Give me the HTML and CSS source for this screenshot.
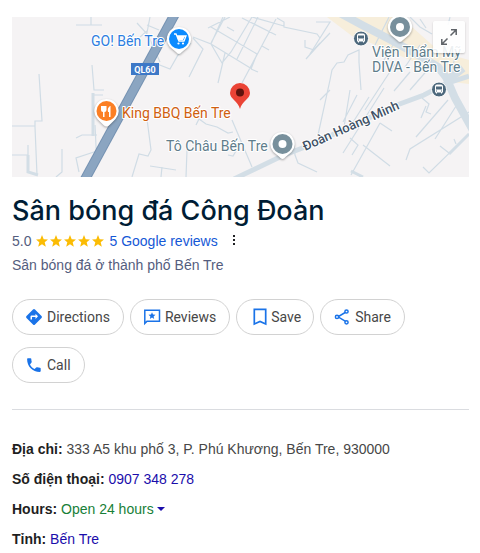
FILE: index.html
```html
<!DOCTYPE html>
<html lang="vi">
<head>
<meta charset="utf-8">
<meta name="viewport" content="width=device-width, initial-scale=1">
<title>Sân bóng đá Công Đoàn</title>
<link rel="stylesheet" href="styles.css">
</head>
<body>
<main class="panel">
  <div class="map">
    <svg class="map-canvas" viewBox="12 17 457 160" preserveAspectRatio="xMidYMid slice" role="img" aria-label="Bản đồ">
      <rect class="land" x="-500" y="17" width="1500" height="160"/>
      <path class="zone" d="M327 17H396L412 27 440 52 469 60V84L452 82 430 68 405 58 376 45 352 36Z"/>
      <g class="lanes">
        <path d="M76 25H102M91 17V25M39 74L42 121H35V127L37 175M12 126H35M92 65L94 90H104M94 95H103M95 125L97 167M76 138L82 135H97M97 151L76 158 79 172M62 149V172L56 177M28 145V171M28 155H12"/>
        <path d="M137 23L148 35 160 62M150 17L146 38M147 25L159 30M140 37L147 31"/>
        <path d="M225 17L211 43M230 17L208 28M252 17L231 52 222 63 211 44 193 37M223 17L211 44M211 27L257 54 251 69M227 27L234 31M242 18L276 35M258 17L237 59M211 44L252 69M225 53L218 83M193 38L203 49 189 77M152 62L170 69 178 55 191 43M276 19L242 83M252 17L284 26M262 46L269 50M251 69L258 72M277 18L284 22V27L317 34 320 38M305 40V47L314 50M306 59L320 43"/>
        <path d="M232 120L252 167M196 125L199 119 206 124 217 127 228 133 233 132M228 155L233 156 236 151M293 139L295 155 298 163 317 172M147 119L151 150 148 156 139 154 132 177M150 166L176 170M162 167L161 177M187 150L186 177"/>
        <path d="M310 54L330 22 316 22M310 54L330 33M320 100L330 90M359 63V50L348 55 344 62 337 63 332 70 330 80 318 135M359 62L361 90M350 90L345 121 343 133M357 95L343 122M369 97L350 127M384 88L343 153M350 138L358 145 352 155M363 145L390 166M380 123L392 131M380 123L351 175M422 98L429 104 426 112 431 114M426 106L421 118M448 100L416 137M458 103L435 139M469 112L410 149 406 160M469 134L429 173 423 167M440 146L449 153M454 139L456 144"/>
        <path d="M410 17L420 27 432 34M420 19L426 28M389 17L375 45M399 35L384 60M420 45L405 67M395 64L365 110M430 67L410 90M410 72L394 91M450 17L448 25M456 54L450 76"/>
      </g>
      <g class="streets">
        <path d="M93 93V136M28 155V172L38 175M351 171L363 177M449 154L469 134"/>
        <path class="wide" d="M234 179L282 156 310 145 397 105 424 95 445 84 469 76"/>
        <path class="main" d="M338 12L362 25 391 40 420 56 438 67 446 77 455 98 475 134"/>
        <path class="main" d="M463 68L445 82"/>
      </g>
      <path class="highway-edge" d="M176 12L83 183"/>
      <path class="highway" d="M176 12L83 183"/>
      <rect class="shield" x="131" y="63" width="28" height="12"/>
      <text class="shield-text" x="145" y="73" text-anchor="middle">QL60</text>

      <g class="pin">
        <path class="pin-shell" d="M179 27a12 12 0 0 1 9 20l-6 5q-3 4-6 0l-6-5a12 12 0 0 1 9-20z"/>
        <circle cx="179" cy="39" r="10" fill="#0b8bff"/>
        <path d="M174 34h2l3 7h5l2-5h-9" fill="none" stroke="#fff" stroke-width="1.300"/><path d="M177 36h8l-2 4h-5z" fill="#fff"/><circle cx="178.500" cy="43.500" r="1.100" fill="#fff"/><circle cx="183" cy="43.500" r="1.100" fill="#fff"/>
      </g>
      <g class="pin">
        <path class="pin-shell" d="M106.500 99a12 12 0 0 1 9 20l-6 6q-3 3-6 0l-6-6a12 12 0 0 1 9-20z"/>
        <circle cx="106.500" cy="111" r="10" fill="#fb7f24"/>
        <path d="M101 106v4q0 2 2 2v5h1.500v-5q2 0 2-2v-4zM110 106q-3 2-2 6h1v5h1.500v-11z" fill="#fff"/>
      </g>
      <g class="pin">
        <path class="pin-shell" d="M282.500 132a12 12 0 0 1 9 20l-6 5q-3 4-6 0l-6-5a12 12 0 0 1 9-20z"/>
        <circle cx="282.500" cy="144" r="10" fill="#78909c"/><circle cx="282.500" cy="144" r="4" fill="#fff"/>
      </g>
      <g class="pin">
        <path class="pin-shell" d="M400 15a12 12 0 0 1 9 20l-6 5q-3 4-6 0l-6-5a12 12 0 0 1 9-20z"/>
        <circle cx="400" cy="27" r="10" fill="#78909c"/><circle cx="400" cy="27" r="4" fill="#fff"/>
      </g>
      <g id="bus">
        <circle cx="361" cy="38.500" r="7.500" fill="#4d687c" stroke="#fff" stroke-width="1"/>
        <path d="M357 35.500q0-2 2-2h4q2 0 2 2v6h-1v1h-1v-1h-4v1h-1v-1h-1z" fill="#fff"/><path d="M358 35.500h6v3h-6zM358 39.500h1v1h-1zM363 39.500h1v1h-1z" fill="#4d687c"/>
      </g>
      <use href="#bus" x="78" y="51"/>
      <path d="M240 83a10 10 0 0 1 10 10c0 6-8 8-10 16-2-8-10-10-10-16a10 10 0 0 1 10-10z" fill="#ea4335"/>
      <circle cx="240" cy="92.500" r="4" fill="#5e130d"/>

      <g class="labels">
        <text class="shop" x="91" y="46">GO! Bến Tre</text>
        <text class="food" x="122" y="118">King BBQ Bến Tre</text>
        <text class="place" x="166" y="151">Tô Châu Bến Tre</text>
        <text class="place" x="372" y="57">Viện Thẩm Mỹ</text>
        <text class="place" x="372" y="72">DIVA - Bến Tre</text>
        <text class="road" transform="translate(305 151) rotate(-24)">Đoàn Hoàng Minh</text>
      </g>
    </svg>
    <button class="expand" type="button" aria-label="Expand map">
      <svg width="18" height="18" viewBox="0 0 18 18"><path d="M10.500 7.500L16 2M11 1.800H16.200V7M7.500 10.500L2 16M1.800 11V16.200H7" fill="none" stroke="#5f6368" stroke-width="1.500"/></svg>
    </button>
  </div>

  <h1 class="title">Sân bóng đá Công Đoàn</h1>
  <div class="rating">
    <span>5.0</span>
    <svg class="stars" width="70" height="14" viewBox="0 0 70 14" role="img" aria-label="5 stars">
      <defs><path id="star" d="M7 1L8.700 5.200 13 5.500 9.700 8.300 10.800 12.700 7 10.300 3.200 12.700 4.300 8.300 1 5.500 5.300 5.200Z"/></defs>
      <use href="#star"/><use href="#star" x="14"/><use href="#star" x="28"/><use href="#star" x="42"/><use href="#star" x="56"/>
    </svg>
    <a class="reviews-link" href="#">5 Google reviews</a>
    <button class="more" type="button" aria-label="More"><svg width="4" height="12" viewBox="0 0 4 12"><path d="M1 0h2v2H1zM1 4h2v2H1zM1 8h2v2H1z" fill="#202124"/></svg></button>
  </div>
  <p class="category">Sân bóng đá ở thành phố Bến Tre</p>

  <div class="actions">
    <button class="action" type="button"><svg viewBox="0 0 18 18"><path fill="#1a73e8" fill-rule="evenodd" d="M8 1.500q1-1 2 0L16.500 8q1 1 0 2L10 16.500q-1 1-2 0L1.500 10q-1-1 0-2zM5.500 11.500H7V9h3.500v2L13 8.300 10.500 5.800V7.500H6.500q-1 0-1 1z"/></svg>Directions</button>
    <button class="action" type="button"><svg viewBox="0 0 18 18"><path fill="none" stroke="#1a73e8" stroke-width="1.500" d="M1.800 15.500V2.300H16.500V13.200H4z"/><path fill="#1a73e8" d="M9 4.300l1 2.300 2.500.2-1.900 1.600.6 2.500L9 9.600l-2.200 1.300.6-2.500-1.900-1.600 2.500-.2z"/></svg>Reviews</button>
    <button class="action tight" type="button"><svg viewBox="0 0 18 18"><path fill="none" stroke="#1a73e8" stroke-width="1.700" d="M3.300 1.300H14.700V16L9 13.500 3.300 16z"/></svg>Save</button>
    <button class="action" type="button"><svg viewBox="0 0 18 18"><path fill="none" stroke="#1a73e8" stroke-width="1.500" d="M13 4L5 8.800l8 4.800"/><g fill="#fff" stroke="#1a73e8" stroke-width="1.500"><circle cx="13.500" cy="3.500" r="1.600"/><circle cx="4" cy="8.900" r="1.600"/><circle cx="13.500" cy="14.300" r="1.600"/></g></svg>Share</button>
    <button class="action" type="button"><svg viewBox="0 0 18 18"><path fill="#1a73e8" d="M5 8.500c1 2 2.600 3.500 4.600 4.600l1.600-1.600q.5-.4 1-.2 1.400.4 2.700.4.800 0 .8.800v2.600q0 .8-.8.800C7.500 15.900 2.100 10.500 2.100 3q0-.8.800-.8h2.600q.8 0 .8.800 0 1.400.4 2.700.1.500-.2.900z"/></svg>Call</button>
  </div>

  <hr class="rule">

  <dl class="facts">
    <div><dt>Địa chỉ:</dt> <dd>333 A5 khu phố 3, P. Phú Khương, Bến Tre, 930000</dd></div>
    <div><dt>Số điện thoại:</dt> <dd><a href="#">0907 348 278</a></dd></div>
    <div><dt>Hours:</dt> <dd><button class="hours" type="button">Open 24 hours<span class="caret"></span></button></dd></div>
    <div><dt>Tỉnh:</dt> <dd><a href="#">Bến Tre</a></dd></div>
  </dl>
</main>
</body>
</html>
```
FILE: styles.css
```css
* { box-sizing: border-box; }
body {
  margin: 0;
  background: #fff;
  color: #474747;
  font: 14px/20px "Liberation Sans", Arial, sans-serif;
}
button { font: inherit; color: inherit; background: none; border: 0; padding: 0; cursor: pointer; }
a { text-decoration: none; }
.panel { padding: 17px 11px 0 12px; }

.map { position: relative; height: 160px; overflow: hidden; }
.map-canvas { display: block; width: 100%; height: 100%; }
.land { fill: #f5f3f4; }
.zone { fill: #f7eedb; }
.lanes { fill: none; stroke: #d0dce5; stroke-width: 1.2; }
.streets { fill: none; stroke: #d3dee6; stroke-width: 3; }
.wide { stroke-width: 5; }
.main { stroke-width: 8; }
.highway-edge { stroke: #7592b2; stroke-width: 10; }
.highway { stroke: #8ba5c1; stroke-width: 8; }
.shield { fill: #3d78c7; }
.shield-text { fill: #fff; font: 700 9px Roboto, sans-serif; }
.pin-shell { fill: #fff; }
.pin { filter: drop-shadow(0 1px 1px #0005); }
.labels text {
  font: 14px Roboto, sans-serif;
  stroke: #fff;
  stroke-width: 2px;
  stroke-linejoin: round;
  paint-order: stroke;
}
.labels .shop { fill: #2c7de0; }
.labels .food { fill: #d0600f; }
.labels .place { fill: #607d8b; }
.labels .road { fill: #3f5266; font-size: 13px; font-weight: 500; }
.expand {
  position: absolute;
  top: 4px;
  right: 4px;
  width: 32px;
  height: 32px;
  display: grid;
  place-items: center;
  background: #ffffffe0;
  border-radius: 2px;
  box-shadow: 0 1px 2px #0003;
}

.title {
  margin: 16px 0 0;
  color: #001d35;
  font: 500 27px/36px Inter, sans-serif;
}
.rating { display: flex; align-items: center; margin-top: 2px; color: #545d7e; }
.stars { margin: 0 4px; fill: #fbbc04; }
.reviews-link { color: #1558d6; }
.more { display: flex; margin-left: 14px; }
.category { margin: 4px 0 0; color: #545d7e; }

.actions { display: flex; flex-wrap: wrap; gap: 12px 6px; margin-top: 24px; }
.action {
  display: flex;
  align-items: center;
  gap: 4px;
  height: 36px;
  padding: 0 13px 0 12px;
  border: 1px solid #d2d2d2;
  border-radius: 18px;
  font: 14px/20px Roboto, sans-serif;
}
.action svg { width: 18px; height: 18px; }
.tight { gap: 2px; padding: 0 12px 0 14px; }

.rule { margin: 26px 0 0; border: 0; border-top: 1px solid #dadce0; }

.facts { display: grid; gap: 10px; margin: 29px 0 0; }
.facts dt { display: inline; font-weight: 700; color: #1f1f1f; }
.facts dd { display: inline; margin: 0; }
.facts a { color: #1a0dab; }
.hours { color: #188038; }
.caret {
  display: inline-block;
  margin-left: 3px;
  vertical-align: 3px;
  border: 4px solid transparent;
  border-top-color: #1a0dab;
  border-bottom: 0;
}
```
